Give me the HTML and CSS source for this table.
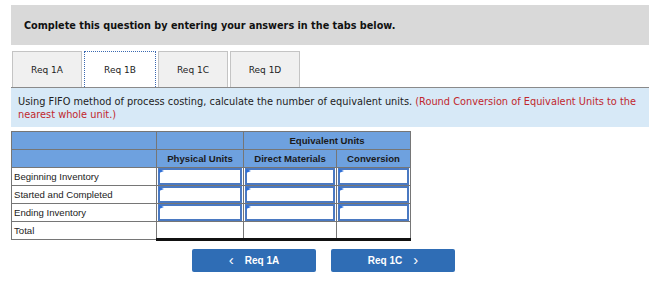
FILE: index.html
```html
<!DOCTYPE html>
<html lang="en">
<head>
    <meta charset="UTF-8">
    <meta name="viewport" content="width=device-width, initial-scale=1.0">
    <title>Equivalent Units</title>
    <link rel="stylesheet" href="styles.css">
</head>
<body>
    <div class="question-head">Complete this question by entering your answers in the tabs below.</div>

    <div class="tabs">
        <div class="tab">Req 1A</div>
        <div class="tab active">Req 1B</div>
        <div class="tab">Req 1C</div>
        <div class="tab">Req 1D</div>
    </div>

    <div class="instructions">
        Using FIFO method of process costing, calculate the number of equivalent units.
        <span class="hint">(Round Conversion of Equivalent Units to the nearest whole unit.)</span>
    </div>

    <table class="units-table">
        <colgroup>
            <col class="col-label">
            <col class="col-phys">
            <col class="col-dm">
            <col class="col-conv">
        </colgroup>
        <thead>
            <tr>
                <th></th>
                <th></th>
                <th colspan="2">Equivalent Units</th>
            </tr>
            <tr>
                <th></th>
                <th>Physical Units</th>
                <th>Direct Materials</th>
                <th>Conversion</th>
            </tr>
        </thead>
        <tbody>
            <tr>
                <td class="label">Beginning Inventory</td>
                <td class="entry"><div class="field"></div></td>
                <td class="entry"><div class="field"></div></td>
                <td class="entry"><div class="field"></div></td>
            </tr>
            <tr>
                <td class="label">Started and Completed</td>
                <td class="entry"><div class="field"></div></td>
                <td class="entry"><div class="field"></div></td>
                <td class="entry"><div class="field"></div></td>
            </tr>
            <tr>
                <td class="label">Ending Inventory</td>
                <td class="entry"><div class="field"></div></td>
                <td class="entry"><div class="field"></div></td>
                <td class="entry"><div class="field"></div></td>
            </tr>
            <tr class="total">
                <td class="label">Total</td>
                <td></td>
                <td></td>
                <td></td>
            </tr>
        </tbody>
    </table>

    <div class="nav">
        <button class="nav-btn"><span class="chev">&lsaquo;</span> Req 1A</button>
        <button class="nav-btn">Req 1C <span class="chev">&rsaquo;</span></button>
    </div>
</body>
</html>
```

FILE: styles.css
```css
* {
    box-sizing: border-box;
    margin: 0;
    padding: 0;
}
body {
    font-family: "DejaVu Sans", Verdana, sans-serif;
    background: #fff;
    color: #222;
    width: 657px;
}
.question-head {
    margin: 5px 8px 0 11px;
    height: 40px;
    background: #d9d9d9;
    padding: 15px 0 0 13px;
    font-size: 9.7px;
    line-height: 12px;
    font-weight: bold;
    color: #111;
}
.tabs {
    display: flex;
    gap: 2px;
    margin: 6px 0 0 12px;
}
.tab {
    width: 70px;
    height: 36px;
    border: 1px solid #c4c4c4;
    border-bottom: none;
    background: #f0f0f0;
    display: flex;
    align-items: center;
    justify-content: center;
    font-size: 9px;
    color: #222;
}
.tab.active {
    width: 72px;
    background: #fff;
    border: 1px dotted #3a68b0;
    border-bottom: none;
}
.instructions {
    margin: 0 8px 0 11px;
    height: 40px;
    background: #d7e9f7;
    border-top: 1px solid #8a8a8a;
    padding: 7px 7px 0;
    font-size: 9.8px;
    line-height: 13px;
    color: #222;
}
.hint {
    color: #c1272d;
}
.units-table {
    margin: 4px 0 0 11px;
    border-collapse: collapse;
    table-layout: fixed;
    width: 399px;
    font-family: "Liberation Sans", Arial, sans-serif;
    font-size: 9.6px;
}
.col-label { width: 145px; }
.col-phys { width: 87px; }
.col-dm { width: 93px; }
.col-conv { width: 74px; }
.units-table th {
    background: #6ea1df;
    border: 1px solid #767676;
    height: 18px;
    font-weight: bold;
    color: #1a1a1a;
    text-align: center;
}
.units-table td {
    border: 1px solid #767676;
    height: 18px;
    padding: 0;
}
.units-table td.label {
    padding-left: 2px;
    color: #222;
}
.units-table td.entry {
    padding: 0 1px;
}
.field {
    position: relative;
    height: 17px;
    border: 2px solid #4a79c2;
    background: #fff;
}
/* small flag marking an answer cell */
.field::before {
    content: "";
    position: absolute;
    left: -1px;
    top: -1px;
    border-left: 5px solid #2f6fd6;
    border-top: 2.5px solid transparent;
    border-bottom: 2.5px solid transparent;
}
.total td:not(.label) {
    border-top: 1px solid #222;
    border-bottom: 3px solid #111;
}
.nav {
    display: flex;
    gap: 15px;
    margin: 8px 0 0 192px;
}
.nav-btn {
    width: 124px;
    height: 23px;
    border: none;
    border-radius: 2px;
    background: #2f6db5;
    color: #fff;
    font-family: "Liberation Sans", Arial, sans-serif;
    font-size: 10px;
    font-weight: bold;
    display: flex;
    align-items: center;
    justify-content: center;
    gap: 11px;
}
.chev {
    font-size: 15px;
    font-weight: normal;
    line-height: 1;
    margin-top: -2px;
}
```
